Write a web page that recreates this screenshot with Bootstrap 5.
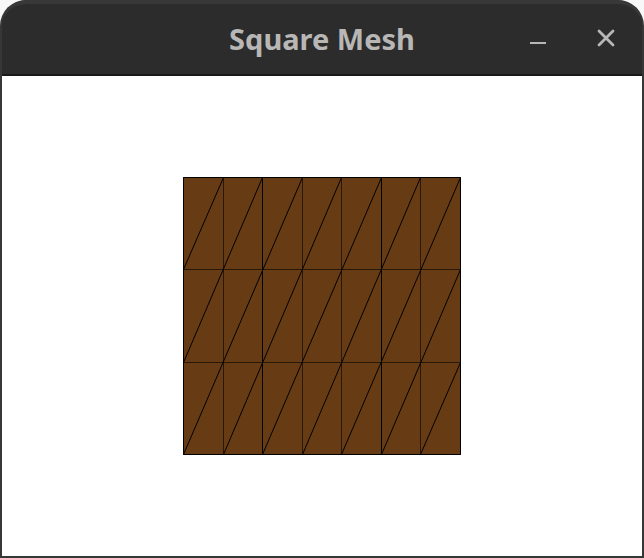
<!DOCTYPE html>
<html lang="en">
<head>
<meta charset="utf-8">
<meta name="viewport" content="width=device-width, initial-scale=1">
<title>Square Mesh</title>
<link href="https://cdn.jsdelivr.net/npm/bootstrap@5.3.0/dist/css/bootstrap.min.css" rel="stylesheet">
<style>
body { background: #f8f8f8; font-family: "Noto Sans", "Open Sans", sans-serif; }
.app-window { background: #373737; border-radius: 26px 26px 0 0; padding: 0 2px 2px; }
.title-bar { display: grid; grid-template-columns: 1fr auto 1fr; height: 76px; background: #2c2c2c; border-top: 4px solid #383838; border-bottom: 2px solid #1b181b; border-radius: 25px 25px 0 0; }
.title-text { color: #b8b7b6; font-size: 29px; line-height: 36px; font-weight: 700; }
.window-controls { gap: 36px; padding-right: 20px; }
.control-btn { width: 32px; height: 32px; color: #b8b7b6; }
.control-btn svg { display: block; }
.mesh { width: 278px; height: 278px; }
</style>
</head>
<body>
<div class="app-window d-flex flex-column min-vh-100">
  <header class="title-bar align-items-center">
    <span></span>
    <h1 class="title-text m-0">Square Mesh</h1>
    <div class="window-controls d-flex justify-content-end">
      <button type="button" class="control-btn btn p-0 border-0" aria-label="Minimize">
        <svg width="32" height="32" viewBox="0 0 32 32"><path d="M8 20h16" stroke="currentColor" stroke-width="2"/></svg>
      </button>
      <button type="button" class="control-btn btn p-0 border-0" aria-label="Close">
        <svg width="32" height="32" viewBox="0 0 32 32"><path d="M9 8l14 14M23 8L9 22" stroke="currentColor" stroke-width="2.800" stroke-linecap="round"/></svg>
      </button>
    </div>
  </header>
  <main class="flex-grow-1 d-flex align-items-center justify-content-center bg-white">
    <svg class="mesh" viewBox="0 0 278 278" role="img" aria-label="Square triangle mesh">
      <rect width="278" height="278" fill="#673c15"/>
      <g fill="none" stroke="#000">
        <path d="M40.5 0v278M119.5 0v278M158.5 0v278M237.5 0v278M0 92.500h278M0 185.500h278" stroke-opacity=".6"/>
        <path d="M79.500 0v278M198.500 0v278"/>
        <path d="M.5 92.500L40.500 .5M.5 185.500L79.500 .5M.5 277.500L119.500 .5M40.500 277.500L158.500 .5M79.500 277.500L198.500 .5M119.500 277.500L237.500 .5M158.500 277.500L277.500 .5M198.500 277.500L277.500 92.500M237.500 277.500L277.500 185.500"/>
        <path d="M.5 .5h277v277H.5z"/>
      </g>
    </svg>
  </main>
</div>
<script src="https://cdn.jsdelivr.net/npm/bootstrap@5.3.0/dist/js/bootstrap.bundle.min.js"></script>
</body>
</html>
